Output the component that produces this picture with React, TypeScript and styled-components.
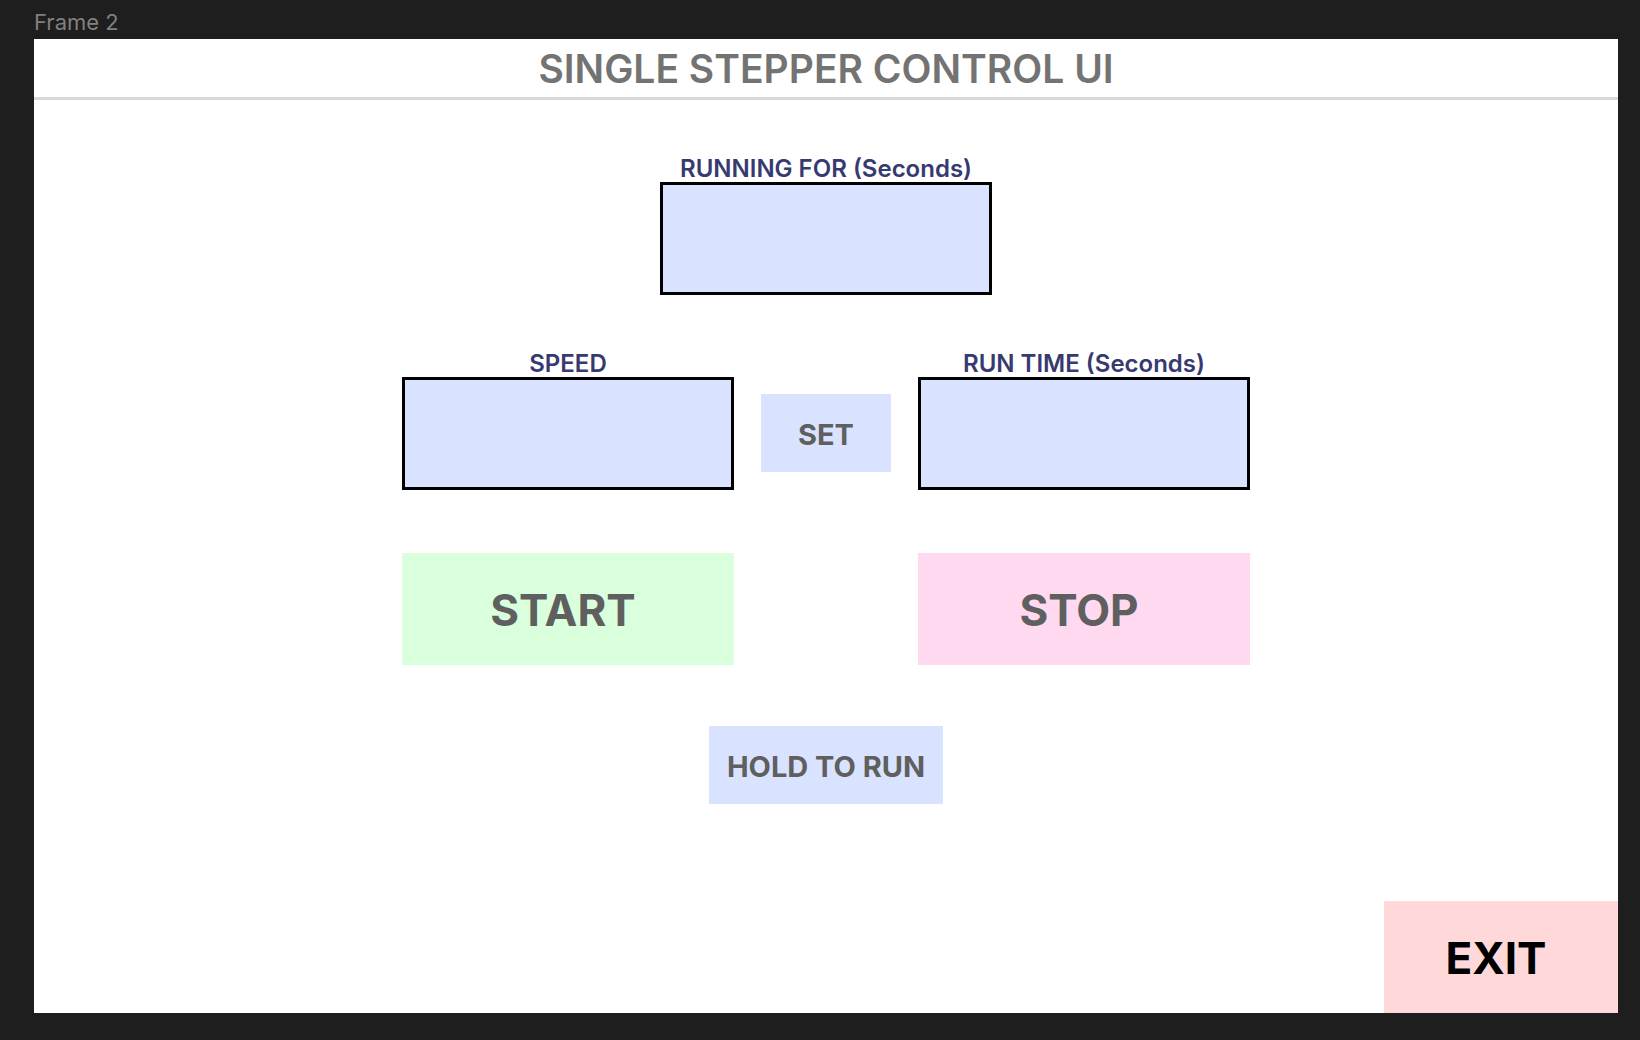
import React from "react";
import styled, { createGlobalStyle } from "styled-components";

const GlobalStyle = createGlobalStyle`
  *, *::before, *::after { box-sizing: border-box; }
  body {
    margin: 0;
    background: #1e1e1e;
    font-family: Inter, "Liberation Sans", sans-serif;
  }
`;

const Canvas = styled.div`
  display: flex;
  flex-direction: column;
  min-height: 100vh;
  padding: 6px 22px 27px 34px;
`;

const FrameName = styled.div`
  height: 33px;
  color: #808080;
  font-size: 22px;
  line-height: 32px;
`;

const Frame = styled.main`
  flex: 1;
  display: flex;
  flex-direction: column;
  background: #ffffff;
`;

const Header = styled.header`
  padding: 6px 16px 4px;
  border-bottom: 3px solid #d9d9d9;
  text-align: center;
`;

const Title = styled.h1`
  margin: 0;
  color: #737373;
  font-size: 39px;
  font-weight: 600;
  line-height: 48px;
`;

const Panel = styled.form`
  flex: 1;
  display: flex;
  flex-direction: column;
  align-items: center;
  padding-top: 56px;
`;

const Field = styled.div`
  display: flex;
  flex-direction: column;
  align-items: center;
  width: 100%;
  max-width: 332px;
`;

const Label = styled.label`
  color: #363a70;
  font-size: 24px;
  font-weight: 600;
  line-height: 26px;
  white-space: nowrap;
`;

const ValueBox = styled.input`
  width: 100%;
  height: 113px;
  padding: 0 16px;
  border: 3px solid #000000;
  border-radius: 0;
  background: #d9e3ff;
  color: #363a70;
  font: 500 39px Inter, "Liberation Sans", sans-serif;
  text-align: center;
`;

const Controls = styled.div`
  display: grid;
  grid-template-columns: 332fr 130fr 332fr;
  column-gap: 27px;
  width: 100%;
  max-width: 848px;
  margin: 56px 0 61px;
`;

const Button = styled.button<{ $tone: string }>`
  border: 0;
  border-radius: 0;
  background: ${({ $tone }) => $tone};
  color: #5f5f5f;
  font-family: inherit;
  font-weight: 700;
  white-space: nowrap;
  cursor: pointer;
`;

const SmallButton = styled(Button)`
  height: 78px;
  padding: 2px 16px 0;
  font-size: 29px;
`;

const SetButton = styled(SmallButton)`
  align-self: end;
  margin-bottom: 18px;
`;

const HoldButton = styled(SmallButton)`
  width: 234px;
`;

const LargeButton = styled(Button)`
  height: 112px;
  padding: 2px 10px 0 0;
  font-size: 44px;
`;

const StartButton = styled(LargeButton)`
  grid-column: 1;
  margin-top: 63px;
`;

const StopButton = styled(LargeButton)`
  grid-column: 3;
  margin-top: 63px;
`;

const ExitButton = styled(LargeButton)`
  align-self: flex-end;
  width: 234px;
  margin-top: auto;
  color: #000000;
`;

function ValueField({ id, label, readOnly }: { id: string; label: string; readOnly?: boolean }) {
  return (
    <Field>
      <Label htmlFor={id}>{label}</Label>
      <ValueBox id={id} type="text" inputMode="numeric" readOnly={readOnly} />
    </Field>
  );
}

export default function App() {
  return (
    <>
      <GlobalStyle />
      <Canvas>
        <FrameName>Frame 2</FrameName>
        <Frame>
          <Header>
            <Title>SINGLE STEPPER CONTROL UI</Title>
          </Header>
          <Panel onSubmit={(event) => event.preventDefault()}>
            <ValueField id="running-for" label="RUNNING FOR (Seconds)" readOnly />
            <Controls>
              <ValueField id="speed" label="SPEED" />
              <SetButton type="submit" $tone="#d9e3ff">SET</SetButton>
              <ValueField id="run-time" label="RUN TIME (Seconds)" />
              <StartButton type="button" $tone="#d9ffdc">START</StartButton>
              <StopButton type="button" $tone="#ffd9f0">STOP</StopButton>
            </Controls>
            <HoldButton type="button" $tone="#d9e3ff">HOLD TO RUN</HoldButton>
            <ExitButton type="button" $tone="#ffd9d9">EXIT</ExitButton>
          </Panel>
        </Frame>
      </Canvas>
    </>
  );
}
